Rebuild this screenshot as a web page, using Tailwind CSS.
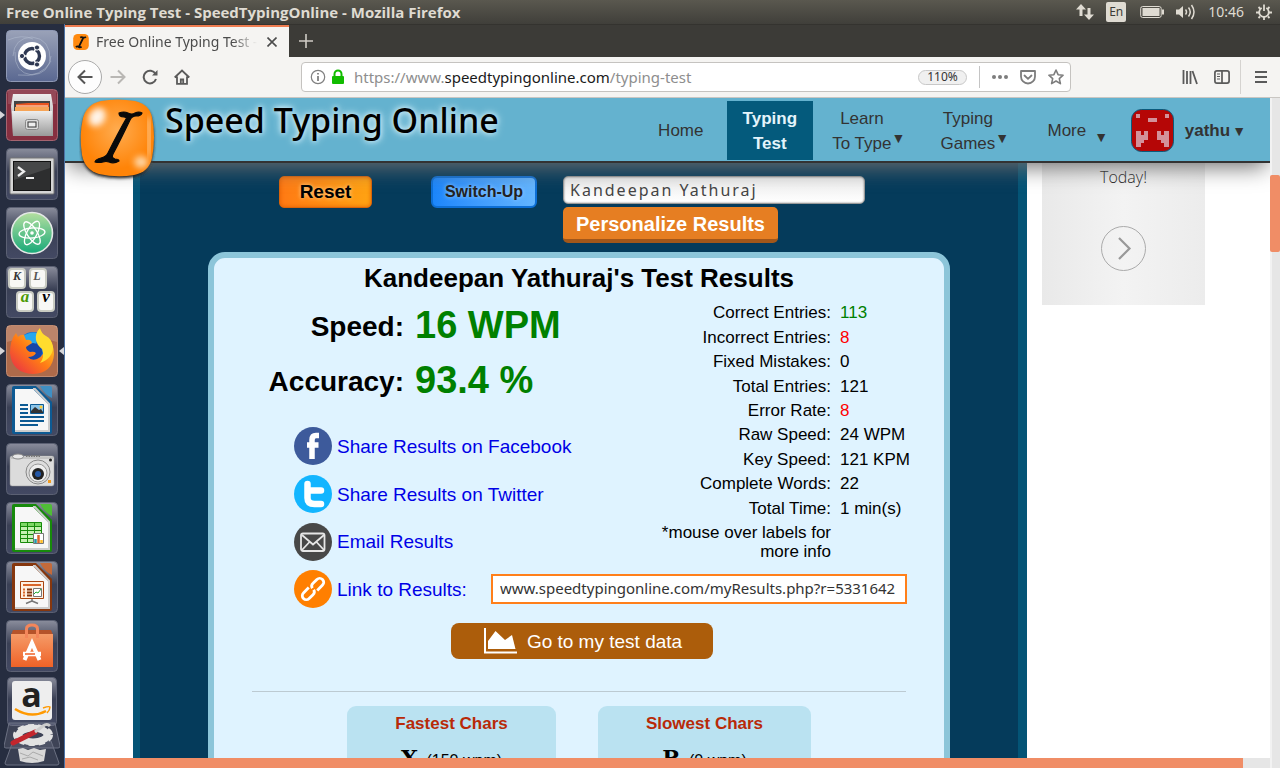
<!DOCTYPE html>
<html lang="en">
<head>
<meta charset="utf-8">
<title>Free Online Typing Test - SpeedTypingOnline</title>
<script src="https://cdn.jsdelivr.net/npm/@tailwindcss/browser@4"></script>
</head>
<body class="flex h-screen flex-col overflow-hidden bg-[#3c3b37] font-['Liberation_Sans',sans-serif] text-black">

<!-- Desktop panel -->
<header class="flex h-6 shrink-0 items-center justify-between bg-linear-to-b from-[#5a584f] to-[#403f3a] px-1.5 font-['Noto_Sans',sans-serif] text-[#dfdbd2]">
  <span class="font-['Open_Sans',sans-serif] text-[15px] font-bold">Free Online Typing Test - SpeedTypingOnline - Mozilla Firefox</span>
  <div class="flex items-center pr-0.5">
    <svg class="mr-3 h-4 w-[18px]" viewBox="0 0 18 16" fill="#dfdbd2"><path d="M5 0l5 5.500H6.500V12h-3V5.500H0zM13 16l-5-5.500h3.500V4h3v6.500H18z"/></svg>
    <span class="mr-3.5 flex h-5 w-5 items-center justify-center rounded-xs bg-[#dfdbd2] text-xs text-[#3c3b37]">En</span>
    <svg class="mr-3 h-3.5 w-6" viewBox="0 0 24 14" fill="none" stroke="#dfdbd2"><rect x=".7" y="1.500" width="20.500" height="11" rx="2"/><rect x="3" y="3.500" width="16" height="7" fill="#dfdbd2"/><path d="M23 4.500v5" stroke-width="2"/></svg>
    <svg class="mr-3 h-4 w-5" viewBox="0 0 20 16" fill="none" stroke="#dfdbd2" stroke-width="1.500"><path d="M0 5.500h3l4-3.500v12l-4-3.500H0z" fill="#dfdbd2" stroke="none"/><path d="M9.500 5.500q2 2.500 0 5M12.500 3.500q3.500 4.500 0 9M15.500 1q5 7 0 14"/></svg>
    <span class="mr-3 text-sm">10:46</span>
    <svg class="h-4 w-4" viewBox="0 0 16 16" fill="none" stroke="#dfdbd2" stroke-width="1.800"><path d="M5.700 4a4.800 4.800 0 1 0 4.600 0M8 .5V7M8 13.500V16M0 8.500h3M13 8.500h3M2.500 3l1.500 1.500M13.500 3L12 4.500M2.500 14L4 12.500M13.500 14L12 12.500"/></svg>
  </div>
</header>

<div class="flex min-h-0 flex-1">
  <!-- Launcher -->
  <aside class="flex w-[65px] shrink-0 flex-col gap-[7px] overflow-hidden border-r border-[#4d73a6] bg-[#262d40] pt-1.5 pl-1.5">
    <svg class="size-[52px] shrink-0" viewBox="0 0 52 52">
      <defs>
        <linearGradient id="tile" x2="0" y2="1"><stop stop-color="#8a8d9c"/><stop offset=".45" stop-color="#3a4055"/><stop offset="1" stop-color="#434963"/></linearGradient>
        <linearGradient id="steel" x2="0" y2="1"><stop stop-color="#eee"/><stop offset="1" stop-color="#999"/></linearGradient>
        <linearGradient id="green" x2="0" y2="1"><stop stop-color="#b5dfa0"/><stop offset="1" stop-color="#17a978"/></linearGradient>
        <linearGradient id="fire" x1="1" x2="0" y2="1"><stop stop-color="#ffe226"/><stop offset=".5" stop-color="#ff7b16"/><stop offset="1" stop-color="#e6264d"/></linearGradient>
        <linearGradient id="bag" x2="0" y2="1"><stop stop-color="#f59b68"/><stop offset="1" stop-color="#ef6227"/></linearGradient>
        <linearGradient id="dash" x2="0" y2="1"><stop stop-color="#9aa2b8"/><stop offset="1" stop-color="#5a6891"/></linearGradient>
      </defs>
      <rect x=".5" y=".5" width="51" height="51" rx="4" fill="url(#dash)" stroke="#8f99b5"/>
      <g fill="none" stroke="#b6bfd2" stroke-opacity=".5"><path d="M7 26Q8 8 26 7q19 2 18 24M45 26Q43 44 26 45 8 43 9 22M12 45Q36 48 45 31M2 10Q16 4 27 9"/></g>
      <circle cx="26" cy="26" r="14" fill="#fff"/>
      <circle cx="26" cy="26" r="7.500" fill="none" stroke="#2e3852" stroke-width="3.400"/>
      <path d="M26 26L13 26M26 26l6-12M26 26l6 12" stroke="#fff" stroke-width="1.500"/><circle cx="26" cy="26" r="5" fill="#fff"/>
      <g fill="#2e3852" stroke="#fff"><circle cx="16" cy="26" r="2.600"/><circle cx="31" cy="17.500" r="2.600"/><circle cx="31" cy="34.500" r="2.600"/></g>
    </svg>
    <div class="relative h-[52px] shrink-0">
      <svg class="h-[52px] w-[52px]" viewBox="0 0 52 52">
        <rect x=".5" y=".5" width="51" height="51" rx="4" fill="#862f40" stroke="#a56470"/><path d="M2 1h48v14H2z" fill="#fff" opacity=".12"/>
        <path d="M7 5h38l2 12v30H7l-2-30z" fill="url(#steel)"/><path d="M8 12h36v10H8z" fill="#444"/><path d="M10 15l12-1h21v6H10z" fill="#e95420"/><path d="M9 18h34v4H9z" fill="#f6a457"/><path d="M10 17h32" stroke="#fff3d8"/>
        <path d="M6 22h40l-1 25H7z" fill="url(#steel)"/><rect x="19.500" y="30.500" width="13" height="10" rx="2" fill="#ddd" stroke="#888"/><rect x="22" y="33" width="8" height="5" fill="#eee" stroke="#333"/>
      </svg>
      <svg class="absolute top-5 -left-1.5 h-3 w-[5px]" viewBox="0 0 5 12"><path d="M0 2v8l5-4z" fill="#d5d6da"/></svg>
    </div>
    <svg class="size-[52px] shrink-0" viewBox="0 0 52 52">
      <rect x=".5" y=".5" width="51" height="51" rx="4" fill="url(#tile)" stroke="#5b6073"/>
      <rect x="4" y="10" width="44" height="36" rx="1" fill="#d5d5d5" stroke="#777"/><rect x="7.500" y="13.500" width="37" height="29" fill="#2d2e2f" stroke="#111"/><path d="M8 14h36v6L8 32z" fill="#fff" opacity=".12"/>
      <path d="M12 19l6 4.500-6 4.500M20 30h8" fill="none" stroke="#eee" stroke-width="2.200"/>
    </svg>
    <svg class="size-[52px] shrink-0" viewBox="0 0 52 52">
      <rect x=".5" y=".5" width="51" height="51" rx="4" fill="url(#tile)" stroke="#5b6073"/>
      <circle cx="26" cy="26" r="20.500" fill="url(#green)" stroke="#e4e8e6" stroke-width="1.600"/>
      <g fill="none" stroke="#fff" stroke-width="1.300"><ellipse cx="26" cy="26" rx="13" ry="5" transform="rotate(-5 26 26)"/><ellipse cx="26" cy="26" rx="13" ry="5" transform="rotate(57 26 26)"/><ellipse cx="26" cy="26" rx="13" ry="5" transform="rotate(118 26 26)"/></g><circle cx="26" cy="26" r="1.800" fill="#fff"/>
    </svg>
    <svg class="size-[52px] shrink-0" viewBox="0 0 52 52" font-family="Liberation Serif" font-style="italic" font-weight="bold" font-size="12" text-anchor="middle">
      <rect x=".5" y=".5" width="51" height="51" rx="4" fill="url(#tile)" stroke="#5b6073"/>
      <g fill="#f8f8f5" stroke="#c9cbc2" stroke-width="2"><rect x="3" y="3" width="16" height="19" rx="3"/><rect x="24" y="3" width="16" height="19" rx="3"/><rect x="11" y="26" width="16" height="19" rx="3"/><rect x="32" y="26" width="16" height="19" rx="3"/></g>
      <text x="11" y="14" fill="#333">K</text><text x="31" y="14" fill="#555">L</text><text x="19" y="36" font-size="17" fill="#4c9a06">a</text><text x="40" y="36" font-size="17">v</text>
    </svg>
    <div class="relative h-[52px] shrink-0">
      <svg class="h-[52px] w-[52px]" viewBox="0 0 52 52">
        <rect x=".5" y=".5" width="51" height="51" rx="4" fill="#ae6a4a" stroke="#c08a70"/><path d="M1 1h50v16q-25-8-50 0z" fill="#fff" opacity=".18"/>
        <circle cx="27" cy="22" r="15" fill="#176fd4"/><path d="M17 11q9-6 17-2l-6 14-10-3z" fill="#26a7ed"/><circle cx="27" cy="27" r="9" fill="#1745a8"/>
        <path d="M10 8l2 4q3-3 6-2l2 5q5-1 6 3l-6 4q0 3 4 5 4-1 6 1-2 4-8 4 3 4 9 2 8-3 7-13l4-8q6 6 6 16-1 19-21 20Q6 48 4 28q0-13 6-20z" fill="url(#fire)"/>
        <path d="M34 3q-5 5-4 12 1 5 6 9 3 8-2 14 13-5 13-16Q46 14 40 11 35 8 34 3z" fill="#ffdc2e"/>
      </svg>
      <svg class="absolute top-5 -left-1.5 h-3 w-[5px]" viewBox="0 0 5 12"><path d="M0 2v8l5-4z" fill="#d5d6da"/></svg>
      <svg class="absolute top-5 right-0 h-3 w-[5px]" viewBox="0 0 5 12"><path d="M5 2v8L0 6z" fill="#d5d6da"/></svg>
    </div>
    <svg class="size-[52px] shrink-0" viewBox="0 0 52 52">
      <rect x=".5" y=".5" width="51" height="51" rx="4" fill="url(#tile)" stroke="#5b6073"/>
      <path d="M6 4q0-2 2-2h22l16 16v30q0 2-2 2H8q-2 0-2-2z" fill="#0d5a93"/><path d="M34 2h10q2 0 2 2v10q-7-3-12-12z" fill="#3f8fc4"/><path d="M9 5h18l16 16v26H9z" fill="#f7f7f7"/><path d="M27 5h2l14 15v27H9" fill="none" stroke="#ccc" stroke-width="2"/>
      <path d="M14 21h8M14 25h8M14 29h8M14 33h24M14 37h24M14 41h18" stroke="#0d5a93" stroke-width="2"/><path d="M24.500 20.500h13v9h-13z" fill="#8cc4e8" stroke="#0d5a93"/><path d="M25 29v-2l4-4 4 3 2-1 2 3v1z" fill="#333"/><circle cx="35" cy="23" r="1.500" fill="#fc3"/>
    </svg>
    <svg class="size-[52px] shrink-0" viewBox="0 0 52 52">
      <rect x=".5" y=".5" width="51" height="51" rx="4" fill="url(#tile)" stroke="#5b6073"/>
      <path d="M4 15q0-2 2-2h40q2 0 2 2v26q0 2-2 2H6q-2 0-2-2z" fill="#dcdcdc" stroke="#999" stroke-width=".5"/><path d="M5 15h42" stroke="#aaa"/><ellipse cx="12" cy="13.500" rx="5.500" ry="2.500" fill="#e8e8e8" stroke="#888"/><path d="M20 13h15" stroke="#777" stroke-width="2" stroke-dasharray="1.500 1"/>
      <circle cx="32" cy="29" r="12" fill="#ddd" stroke="#888"/><circle cx="32" cy="30" r="9" fill="#eee" stroke="#999"/><circle cx="32" cy="31" r="6" fill="#222"/><circle cx="32" cy="31" r="3" fill="#2457a6"/><circle cx="44.500" cy="17" r="1.500" fill="#222"/><path d="M42 37h3v3h-3z" fill="#f39c1f"/>
    </svg>
    <svg class="size-[52px] shrink-0" viewBox="0 0 52 52">
      <rect x=".5" y=".5" width="51" height="51" rx="4" fill="url(#tile)" stroke="#5b6073"/>
      <path d="M6 4q0-2 2-2h22l16 16v30q0 2-2 2H8q-2 0-2-2z" fill="#178a0b"/><path d="M34 2h10q2 0 2 2v10q-7-3-12-12z" fill="#4fbd36"/><path d="M9 5h18l16 16v26H9z" fill="#f7f7f7"/><path d="M27 5h2l14 15v27H9" fill="none" stroke="#ccc" stroke-width="2"/>
      <path d="M14.500 20.500h21v20h-21z" fill="#c5f0b2"/><path d="M14.500 20.500h21v4h-21z" fill="#7ed866"/><path d="M14.500 20.500h21v20h-21zM14.500 24.500h21m-21 4h21m-21 4h21m-21 4h21M21.500 20v20M28.500 20v20" fill="none" stroke="#178a0b"/>
      <path d="M27.500 31.500h10v10h-10z" fill="#fff" stroke="#777"/><path d="M29.500 41v-4" stroke="#29a" stroke-width="2.500"/><path d="M32.500 41v-8" stroke="#d9662b" stroke-width="2.500"/><path d="M35.500 41v-3" stroke="#fb2" stroke-width="2.500"/>
    </svg>
    <svg class="size-[52px] shrink-0" viewBox="0 0 52 52">
      <rect x=".5" y=".5" width="51" height="51" rx="4" fill="url(#tile)" stroke="#5b6073"/>
      <path d="M6 4q0-2 2-2h22l16 16v30q0 2-2 2H8q-2 0-2-2z" fill="#86370e"/><path d="M34 2h10q2 0 2 2v10q-7-3-12-12z" fill="#c46a3a"/><path d="M9 5h18l16 16v26H9z" fill="#f7f7f7"/><path d="M27 5h2l14 15v27H9" fill="none" stroke="#ccc" stroke-width="2"/>
      <path d="M14.500 20.500h23v17h-23z" fill="#fff0e2" stroke="#a8440f"/><path d="M17 24h18" stroke="#d9662b" stroke-width="2"/><path d="M17 28.500h2m-2 3h2m-2 3h2" stroke="#d9662b" stroke-width="2"/><path d="M21 28.500h5m-5 3h5m-5 3h5" stroke="#86370e" stroke-width="2"/><path d="M27.500 27.500h8v8h-8z" fill="#fff" stroke="#777"/><path d="M28 33l2-2 2 1 3-4" stroke="#2a3" fill="none"/><path d="M26 38v2l-6 2.500M26 40l6 2.500" stroke="#777" stroke-width="1.500" fill="none"/>
    </svg>
    <svg class="size-[52px] shrink-0" viewBox="0 0 52 52">
      <rect x=".5" y=".5" width="51" height="51" rx="4" fill="url(#tile)" stroke="#5b6073"/>
      <path d="M7 10h38l2 5H5z" fill="#b5532a"/><path d="M5 14h42v33H5z" fill="url(#bag)"/><path d="M20.500 18V9q0-4 5.500-4t5.500 4v9" fill="none" stroke="#f3865a" stroke-width="3"/>
      <path d="M18.500 40L26 23l7.500 17" fill="none" stroke="#fff" stroke-width="4"/><path d="M17 34h18" stroke="#fff" stroke-width="4.500"/><path d="M19 34h10" stroke="#ef6227" stroke-width="1.500"/>
    </svg>
    <svg class="-mt-1 h-[96px] w-[56px] shrink-0 -ml-0.5" viewBox="0 0 56 96">
      <rect x="3.500" y="2.500" width="49" height="48" rx="4" fill="url(#tile)" stroke="#5b6073"/>
      <rect x="8" y="6" width="40" height="39" rx="3" fill="#eee"/>
      <text x="27.500" y="32" text-anchor="middle" font-family="Open Sans" font-weight="bold" font-size="34" fill="#222">a</text>
      <path d="M11 34q16 10 31 2" fill="none" stroke="#f90" stroke-width="2.500"/><path d="M39 33q6-2 7-1 0 3-3 6" fill="none" stroke="#f90" stroke-width="1.500"/>
      <path d="M5 48h46l5 23q0 2-2 2H2q-2 0-2-2z" fill="#aab" fill-opacity=".18" stroke="#6b7082"/>
      <path d="M9 66h38l8 22q0 2-2 2H3q-2 0-2-2z" fill="#aab" fill-opacity=".15" stroke="#6b7082"/>
      <ellipse cx="29" cy="60" rx="14" ry="7" fill="none" stroke="#e2e2e2" stroke-width="7"/><ellipse cx="29" cy="60" rx="18" ry="9" fill="none" stroke="#e2e2e2" stroke-width="4" stroke-dasharray="6 4"/>
      <path d="M9 68l22-11" stroke="#c3262d" stroke-width="5" stroke-linecap="round"/><path d="M31 57l8-6q4-3 7 0" fill="none" stroke="#ccc" stroke-width="3"/>
      <path d="M14 74l5-1 5 2 6-2 6 2 6-1-2 12q-12 4-24 0z" fill="#d8d8d8"/><path d="M16 78l8 3 5-4 10 4M18 84l8-2 8 3" fill="none" stroke="#aaa"/>
    </svg>
  </aside>

  <!-- Browser window -->
  <main class="flex min-w-0 flex-1 flex-col">
    <div class="flex h-[33px] shrink-0 items-stretch border-t border-[#34332f] bg-[#3c3b37] font-['Noto_Sans',sans-serif]">
      <div class="flex w-56 items-center border-t-2 border-[#ee7c50] bg-[#f5f4f2] pr-2.5 pl-2">
        <svg class="size-4 shrink-0" viewBox="0 0 76 78"><rect width="76" height="78" rx="22" fill="#ff8a10"/><path d="M34 17q8-4 14 0 6 3 14-3M50 16L28 62M13 63q8-5 14 0 6 4 14-1" fill="none" stroke="#111" stroke-width="9"/></svg>
        <span class="ml-[7px] flex-1 overflow-hidden text-sm whitespace-nowrap text-[#4c4c4c] mask-r-from-85%">Free Online Typing Test -</span>
        <button aria-label="Close tab" class="ml-2 p-0.5"><svg class="size-2.5" viewBox="0 0 10 10"><path d="M.5.5l9 9m0-9l-9 9" stroke="#4c4c4c" stroke-width="1.600"/></svg></button>
      </div>
      <button aria-label="New tab" class="ml-2.5"><svg class="size-3.5" viewBox="0 0 14 14"><path d="M7 0v14M0 7h14" stroke="#cfccc5" stroke-width="1.600"/></svg></button>
    </div>
    <div class="flex h-[41px] shrink-0 items-center border-b border-[#c9c6c2] bg-[#f5f4f2] pr-[13px] pl-[3px] font-['Noto_Sans',sans-serif]">
      <button aria-label="Back" class="flex size-[34px] items-center justify-center rounded-full border border-[#aaa] bg-[#fdfdfd]"><svg class="size-4" viewBox="0 0 16 16" fill="none" stroke="#555" stroke-width="2"><path d="M15.500 8H1.500M8 1.500L1.500 8 8 14.500"/></svg></button>
      <button aria-label="Forward" class="ml-2"><svg class="size-4" viewBox="0 0 16 16" fill="none" stroke="#b9b7b4" stroke-width="2"><path d="M.5 8h14M8 1.500L14.500 8 8 14.500"/></svg></button>
      <button aria-label="Reload" class="ml-4"><svg class="size-4" viewBox="0 0 16 16" fill="none" stroke="#5a5a5a" stroke-width="2"><path d="M13.500 5A6.300 6.300 0 1 0 14 10"/><path d="M15.500 1v5.500H10z" fill="#5a5a5a" stroke="none"/></svg></button>
      <button aria-label="Home" class="ml-4"><svg class="size-4" viewBox="0 0 16 16" fill="none" stroke="#5a5a5a" stroke-width="1.800"><path d="M.7 8.500L8 1.500l7.300 7M3 7.500V14.800h10V7.500M6.800 14.500v-4h2.400v4"/></svg></button>
      <div class="mr-[111px] ml-[111px] flex h-[30px] flex-1 items-center rounded-sm border border-[#c5c3c0] bg-white pr-1.5 pl-2">
        <svg class="size-4" viewBox="0 0 16 16" fill="none" stroke="#808080" stroke-width="1.200"><circle cx="8" cy="8" r="6.700"/><path d="M8 7v5M8 4v1.500" stroke-width="1.800"/></svg>
        <svg class="ml-1 h-4 w-4" viewBox="0 0 16 16"><path d="M4.500 8V5a3.500 3.500 0 0 1 7 0v3" fill="none" stroke="#12bc00" stroke-width="2"/><rect x="2" y="7" width="12" height="8" rx="1" fill="#12bc00"/></svg>
        <div role="textbox" aria-label="Address" class="ml-2 flex-1 text-[15px] whitespace-nowrap text-[#8e8e8e]">https://www.<span class="text-[#1a1a1a]">speedtypingonline.com</span>/typing-test</div>
        <button class="flex h-[15px] w-[49px] items-center justify-center rounded-full border border-[#c8c8c8] bg-[#f0f0f0] text-xs text-[#333]">110%</button>
        <span class="ml-3 h-[22px] w-px bg-[#c4c4c4]"></span>
        <button aria-label="Page actions" class="ml-3"><svg class="size-4" viewBox="0 0 16 16" fill="#7d7d7d"><circle cx="2" cy="8" r="2"/><circle cx="8" cy="8" r="2"/><circle cx="14" cy="8" r="2"/></svg></button>
        <button aria-label="Save to Pocket" class="ml-3"><svg class="size-4" viewBox="0 0 16 16" fill="none" stroke="#7d7d7d" stroke-width="1.800"><path d="M1 2h14v5.500a7 7 0 0 1-14 0z" stroke-linejoin="round"/><path d="M4.500 6.500L8 9.800l3.500-3.300" stroke-linecap="round"/></svg></button>
        <button aria-label="Bookmark" class="ml-3"><svg class="size-4" viewBox="0 0 16 16" fill="none" stroke="#7d7d7d" stroke-width="1.600" stroke-linejoin="round"><path d="M8 1l2.100 4.700 5 .5-3.800 3.400 1.100 5L8 12l-4.400 2.600 1.100-5L.9 6.200l5-.5z"/></svg></button>
      </div>
      <button aria-label="Library"><svg class="size-4" viewBox="0 0 16 16" stroke="#5a5a5a" stroke-width="1.800"><path d="M1.500 1v14M5 2v13M8.500 2v13M10.500 2L15 15"/></svg></button>
      <button aria-label="Sidebar" class="ml-4"><svg class="size-4" viewBox="0 0 16 16" fill="none" stroke="#5a5a5a" stroke-width="1.700"><rect x=".9" y="1.900" width="14.200" height="12.200" rx="2"/><path d="M8 2v12"/><path d="M3 5h3M3 7.500h3M3 10h3" stroke-width="1"/></svg></button>
      <span class="ml-2.5 h-[34px] w-px bg-[#d5d3d0]"></span>
      <button aria-label="Menu" class="ml-3.5"><svg class="h-4 w-3" viewBox="0 0 12 16" stroke="#5a5a5a" stroke-width="2"><path d="M0 3h12M0 8h12M0 13h12"/></svg></button>
    </div>

    <div class="flex min-h-0 flex-1 bg-white">
      <div class="flex min-w-0 flex-1 flex-col">
        <div class="flex min-h-0 flex-1 flex-col overflow-hidden">

          <!-- Site header -->
          <div class="relative z-10 flex h-[65px] shrink-0 items-stretch border-b-2 border-[#333] bg-[#64b2cf] text-[17px] leading-[25px] text-[#333] shadow-[0_8px_22px_-4px_#6e6e6e]">
            <a href="#" aria-label="Speed Typing Online" class="flex items-start pl-3.5 text-black">
              <svg class="h-[84px] w-[80px] shrink-0" viewBox="0 0 80 84">
                <defs><radialGradient id="orb" cx=".5" cy=".4"><stop stop-color="#ffac50"/><stop offset="1" stop-color="#ff8408"/></radialGradient><filter id="soft" x="-50%" y="-50%" width="200%" height="200%"><feGaussianBlur stdDeviation="3"/></filter><filter id="drop" x="-20%" y="-20%" width="140%" height="140%"><feGaussianBlur stdDeviation="1.500"/></filter></defs>
                <path d="M22 4Q38 1 56 4 70 7 73 20 77 40 73 61 70 75 55 78 38 81 20 77 6 73 3 58 0 38 4 21 8 7 22 4z" transform="translate(0 1)" fill="#222" filter="url(#drop)"/>
                <path d="M22 3Q38 0 56 3 70 6 73 19 77 39 73 60 70 74 55 77 38 80 20 76 6 72 3 57 0 37 4 20 8 6 22 3z" fill="url(#orb)"/>
                <ellipse cx="18" cy="19" rx="8" ry="10" fill="#fff" opacity=".9" transform="rotate(35 18 19)" filter="url(#soft)"/><ellipse cx="62" cy="64" rx="7" ry="6" fill="#ffe0b8" opacity=".9" filter="url(#soft)"/><path d="M69 20q3 20 0 38" stroke="#ffd09a" stroke-width="4" fill="none" filter="url(#soft)"/>
                <path d="M40 15q5-2 9 0 4 2 7 0 4-2 7 0-1 3-6 3-4 0-6 4Q41 43 34 56q-2 4 2 5 4 0 4 2-5 3-10 1-3-1-6 0-4 1-8 0 1-3 6-4 5-1 7-5Q39 35 47 21q1-2-2-2-5 0-5-4z" fill="#0a0a0a" stroke="#0a0a0a" stroke-width="1.200" stroke-linejoin="round"/>
              </svg>
              <span class="ml-1.5 font-['Noto_Sans',sans-serif] text-[34px] leading-[44px] font-medium whitespace-nowrap [text-shadow:0_0_5px_#d9f2fb,0_0_8px_#d9f2fb]">Speed Typing Online</span>
            </a>
            <nav class="ml-auto flex items-center pt-0.5 text-center">
              <a href="#" class="w-[92px]">Home</a>
              <a href="#" class="flex h-[59px] w-[86px] flex-col justify-center bg-[#045a7c] font-bold text-[#e4f4fb]">Typing<br>Test</a>
              <a href="#" class="flex w-[112px] items-center justify-center"><span>Learn<br>To Type</span><span class="pt-3.5 text-sm leading-none">▼</span></a>
              <a href="#" class="flex w-[100px] items-center justify-center"><span>Typing<br>Games</span><span class="pt-3.5 text-sm leading-none">▼</span></a>
              <a href="#" class="flex w-[106px] items-center justify-center"><span>More</span><span class="ml-2 pt-3 text-sm leading-none">▼</span></a>
            </nav>
            <a href="#" class="flex items-center pt-0.5 pr-6 font-bold">
              <svg class="size-[43px]" viewBox="0 0 43 43"><rect x=".5" y=".5" width="42" height="42" rx="10" fill="#b50606" stroke="#0b5a7c"/><path d="M5 5h4v4H5zM34 5h4v4h-4zM17 9h9v4h-9zM5 22h5v4h3v-4h4v9h-4v3h-3v4H5zM38 22h-5v4h-3v-4h-4v9h4v3h3v4h5z" fill="#d3919a"/></svg>
              <span class="ml-[11px]">yathu</span><span class="ml-0.5 text-sm">▼</span>
            </a>
          </div>

          <div class="flex flex-1 items-start pl-[68px]">
            <section class="w-full max-w-[894px] self-stretch border-r-[9px] border-l-[7px] border-[#045476] bg-[#053b5b] pt-[13px]">
              <form class="flex items-start pl-[139px]">
                <button type="button" class="h-8 w-[93px] rounded-[5px] border border-[#d8640c] bg-linear-to-r from-[#ff7a14] to-[#ffa312] text-[19px] font-bold shadow-[inset_0_0_4px_#e06000] [text-shadow:0_0_4px_#ffd9a0]">Reset</button>
                <button type="button" class="ml-[59px] h-8 w-[106px] rounded-md border-2 border-[#0d6fd6] bg-linear-to-r from-[#1b86fb] to-[#63b5ff] text-base font-bold text-[#222] [text-shadow:0_0_4px_#a6d3ff]">Switch-Up</button>
                <div class="ml-[26px] flex flex-col items-start gap-[3px]">
                  <input aria-label="Your name" value="Kandeepan Yathuraj" class="h-7 w-[302px] rounded-[5px] border border-[#999] bg-linear-to-b from-[#ececec] to-white px-1.5 font-['Noto_Sans',sans-serif] text-base tracking-[2px] text-[#444] shadow-[inset_0_0_2px_#777]">
                  <button type="button" class="h-9 rounded-[5px] border-b-4 border-[#a2571a] bg-[#e67e22] px-[13px] pt-0.5 text-xl leading-none font-bold whitespace-nowrap text-white">Personalize Results</button>
                </div>
              </form>

              <div class="mx-[68px] mt-[9px] h-[600px] rounded-[17px] border-[6px] border-[#8cc5d9] bg-[#dff3ff]">
                <h1 class="text-center text-[26px] leading-10 font-bold">Kandeepan Yathuraj's Test Results</h1>
                <div class="flex">
                  <div class="w-[400px]">
                    <dl class="grid grid-cols-[190px_1fr] gap-x-[11px] leading-[55px] font-bold whitespace-nowrap">
                      <dt class="pt-0.5 text-right text-[28px] leading-[53px]">Speed:</dt><dd class="text-[38px] text-[#008000]">16 WPM</dd>
                      <dt class="pt-0.5 text-right text-[28px] leading-[53px]">Accuracy:</dt><dd class="text-[38px] text-[#008000]">93.4 %</dd>
                    </dl>
                    <div class="mt-[19px] flex flex-col items-start gap-2.5 pl-20 text-[19px] text-[#0000e6]">
                      <a href="#" class="flex items-center gap-[5px]"><svg class="size-[38px]" viewBox="0 0 38 38"><circle cx="19" cy="19" r="19" fill="#3d5a9b"/><path d="M25 8.500h-3q-4 0-4 4.500V32M13 18h11.500" fill="none" stroke="#fff" stroke-width="5.500"/></svg><span class="pt-0.5">Share Results on Facebook</span></a>
                      <a href="#" class="flex items-center gap-[5px]"><svg class="size-[38px]" viewBox="0 0 38 38"><circle cx="19" cy="19" r="19" fill="#13b5ff"/><path d="M13.500 9v14q0 6 7 6H27M14 15.500h13" fill="none" stroke="#fff" stroke-width="6.500" stroke-linecap="round"/></svg><span class="pt-0.5">Share Results on Twitter</span></a>
                      <a href="#" class="flex items-center gap-[5px]"><svg class="size-[38px]" viewBox="0 0 38 38"><circle cx="19" cy="19" r="19" fill="#484848"/><g fill="none" stroke="#e6e6e6" stroke-width="1.800"><rect x="7" y="10.500" width="23.500" height="17.500" rx="2"/><path d="M8 12l11 9.500L30 12M8 27l7.500-8M30 27l-7.500-8"/></g></svg>Email Results</a>
                    </div>
                  </div>
                  <div class="pt-[3px] text-[17px] leading-5">
                    <table class="h-[220px] whitespace-nowrap">
                      <tr><th scope="row" class="w-[217px] p-0 text-right font-normal">Correct Entries:</th><td class="py-0 pr-0 pl-[9px] text-[#008000]">113</td></tr>
                      <tr><th scope="row" class="p-0 text-right font-normal">Incorrect Entries:</th><td class="py-0 pr-0 pl-[9px] text-[#f00]">8</td></tr>
                      <tr><th scope="row" class="p-0 text-right font-normal">Fixed Mistakes:</th><td class="py-0 pr-0 pl-[9px]">0</td></tr>
                      <tr><th scope="row" class="p-0 text-right font-normal">Total Entries:</th><td class="py-0 pr-0 pl-[9px]">121</td></tr>
                      <tr><th scope="row" class="p-0 text-right font-normal">Error Rate:</th><td class="py-0 pr-0 pl-[9px] text-[#f00]">8</td></tr>
                      <tr><th scope="row" class="p-0 text-right font-normal">Raw Speed:</th><td class="py-0 pr-0 pl-[9px]">24 WPM</td></tr>
                      <tr><th scope="row" class="p-0 text-right font-normal">Key Speed:</th><td class="py-0 pr-0 pl-[9px]">121 KPM</td></tr>
                      <tr><th scope="row" class="p-0 text-right font-normal">Complete Words:</th><td class="py-0 pr-0 pl-[9px]">22</td></tr>
                      <tr><th scope="row" class="p-0 text-right font-normal">Total Time:</th><td class="py-0 pr-0 pl-[9px]">1 min(s)</td></tr>
                    </table>
                    <p class="mt-0.5 w-[217px] text-right leading-[19px]">*mouse over labels for<br>more info</p>
                  </div>
                </div>
                <div class="mt-[9px] flex items-center pr-[37px] pl-20">
                  <label for="link" class="flex items-center gap-[5px] text-[19px] whitespace-nowrap text-[#0000e6]"><svg class="size-[38px]" viewBox="0 0 38 38"><circle cx="19" cy="19" r="19" fill="#ff7f00"/><g fill="none" stroke="#fff" stroke-width="2.800" transform="rotate(-45 19 19)"><path d="M17 15H9.500a4 4 0 0 0 0 8H15a4 4 0 0 0 4-3M21 23h7.500a4 4 0 0 0 0-8H23a4 4 0 0 0-4 3"/></g></svg><span class="pt-0.5">Link to Results:</span></label>
                  <input id="link" readonly value="www.speedtypingonline.com/myResults.php?r=5331642" class="ml-auto h-[30px] w-[416px] border-2 border-[#ff7f1a] bg-white px-[7px] pb-0.5 font-['Noto_Sans',sans-serif] text-[15px] text-[#333]">
                </div>
                <div class="mt-[15px] flex justify-center pl-1.5">
                  <button class="flex h-9 w-[262px] items-center justify-center gap-2.5 rounded-lg bg-[#ac5d0b] pl-0.5 text-[19px] whitespace-nowrap text-white"><svg class="h-[26px] w-[33px]" viewBox="0 0 33 26"><path d="M1 0v24.500h32" fill="none" stroke="#fff" stroke-width="2"/><path d="M4 21V13l7.500-10L21 12l7-5 3.500 14z" fill="#fff"/></svg><span class="pt-0.5">Go to my test data</span></button>
                </div>
                <hr class="mx-[38px] mt-8 border-t border-[#bccad2]">
                <div class="mt-3.5 flex justify-center gap-[42px] text-center">
                  <div class="h-[180px] w-[209px] rounded-t-[9px] bg-[#bae2f1]">
                    <h2 class="text-[17px] leading-9 font-bold text-[#b82a08]">Fastest Chars</h2>
                    <p class="leading-8"><b class="mr-1 font-['DejaVu_Serif',serif] text-[22px]">X</b> (150 wpm)</p>
                  </div>
                  <div class="h-[180px] w-[213px] rounded-t-[9px] bg-[#bae2f1]">
                    <h2 class="text-[17px] leading-9 font-bold text-[#b82a08]">Slowest Chars</h2>
                    <p class="leading-8"><b class="mr-1 font-['DejaVu_Serif',serif] text-[22px]">R</b> (0 wpm)</p>
                  </div>
                </div>
              </div>
            </section>
            <aside class="ml-[15px] flex h-[142px] w-[163px] shrink-0 flex-col items-center bg-linear-to-r from-[#e9e9e9] via-[#f3f3f3] to-[#ececec] font-['Open_Sans',sans-serif] text-base font-light">
              <p class="leading-7 text-[#222]">Today!</p>
              <button aria-label="Open" class="mt-[35px]"><svg class="size-[45px]" viewBox="0 0 45 45" fill="none" stroke="#aaa"><circle cx="22.500" cy="22.500" r="22"/><path d="M18 12l10.500 10.500L18 33" stroke="#999" stroke-width="2.200"/></svg></button>
            </aside>
          </div>
        </div>
        <div class="h-2.5 shrink-0 bg-[#e6e6e6] pr-[27px]"><div class="h-full bg-[#f08d66]"></div></div>
      </div>
      <div class="w-2.5 shrink-0 border-l-2 border-[#f2f2f2] bg-[#e6e6e6] pt-[77px]"><div class="-ml-0.5 h-[77px] rounded-xs bg-[#f08d66]"></div></div>
    </div>
  </main>
</div>
</body>
</html>
